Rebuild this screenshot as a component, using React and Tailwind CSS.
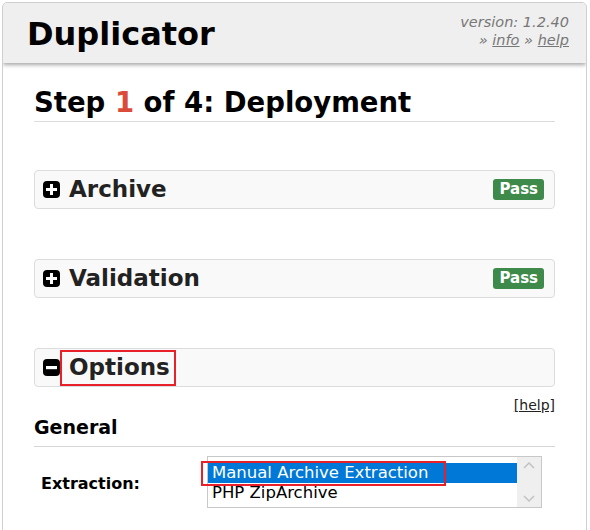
import { useState } from 'react'

const FONT = { fontFamily: '"DejaVu Sans", Verdana, sans-serif' }

function ToggleIcon({ open }) {
  return (
    <svg width="17" height="17" viewBox="0 0 17 17" className="shrink-0">
      <rect x="0" y="0" width="17" height="17" rx="4" fill="#000" />
      {open ? (
        <rect x="3" y="7" width="11" height="3.2" fill="#fff" />
      ) : (
        <path d="M7 3h3v4h4v3h-4v4H7v-4H3V7h4z" fill="#fff" />
      )}
    </svg>
  )
}

function Panel({ title, open, pass, highlight }) {
  return (
    <div className="relative h-[39px] border border-[#dcdcdc] rounded-[4px] bg-[#f9f9f9] flex items-center justify-between pl-[8px] pr-[10px]">
      <div className="flex items-center gap-[9px]">
        <ToggleIcon open={open} />
        <span className="text-[23px] font-bold text-[#222] leading-none">{title}</span>
      </div>
      {pass && (
        <span className="bg-[#3e8a4a] text-white font-bold text-[15px] leading-none rounded-[3px] px-[6px] py-[3px]">
          Pass
        </span>
      )}
      {/* annotation box */}
      {highlight && (
        <span className="absolute left-[25px] top-[1px] w-[116px] h-[36px] border-2 border-[#e8202a]" />
      )}
    </div>
  )
}

export default function App() {
  const [extraction, setExtraction] = useState('manual')

  return (
    <div className="min-h-screen bg-white pt-[2px] pl-[2px]" style={FONT}>
      <div className="w-[585px] h-[540px] border border-[#cfcfcf] rounded-[5px] overflow-hidden bg-white">
        <header className="h-[60px] bg-[#efefef] shadow-[0_2px_4px_rgba(0,0,0,0.35)] flex justify-between items-start pl-[24px] pr-[17px] relative">
          <h1 className="text-[32px] font-bold text-black leading-none mt-[15px]">Duplicator</h1>
          <div className="text-right text-[14.5px] italic text-[#777] leading-[18px] mt-[10px]">
            <div>version: 1.2.40</div>
            <div>
              » <a href="#" className="underline text-[#777]">info</a> » <a href="#" className="underline text-[#777]">help</a>
            </div>
          </div>
        </header>

        <main className="px-[31px]">
          <h2 className="text-[27.5px] font-bold text-black leading-none mt-[26px] pb-[4px] border-b border-[#dcdcdc]">
            Step <span className="text-[#db4b39]">1</span> of 4: Deployment
          </h2>

          <div className="mt-[48px]">
            <Panel title="Archive" pass />
          </div>
          <div className="mt-[50px]">
            <Panel title="Validation" pass />
          </div>
          <div className="mt-[50px]">
            <Panel title="Options" open highlight />
          </div>

          <div className="text-right mt-[6px]">
            <a href="#" className="underline text-[14px] text-[#222] leading-none">[help]</a>
          </div>

          <h3 className="text-[19px] font-bold text-black leading-none mt-[1px] pb-[9px] border-b border-[#d6d6d6]">General</h3>

          <div className="flex items-center mt-[9px]">
            <label className="w-[173px] pl-[7px] pt-[5px] text-[16px] font-bold text-black">Extraction:</label>
            <div className="w-[335px] h-[52px] border border-[#c8c8c8] bg-white flex">
              <div className="flex-1 pt-[6px] text-[16.5px] leading-[20px] text-black">
                <div
                  onClick={() => setExtraction('manual')}
                  className={`relative pl-[4px] ${extraction === 'manual' ? 'bg-[#0078d7] text-white' : ''}`}
                >
                  Manual Archive Extraction
                  <span className="absolute -left-[7px] -top-[2px] w-[245px] h-[25px] border-2 border-[#e8202a]" />
                </div>
                <div
                  onClick={() => setExtraction('zip')}
                  className={`pl-[4px] ${extraction === 'zip' ? 'bg-[#0078d7] text-white' : ''}`}
                >
                  PHP ZipArchive
                </div>
              </div>
              <div className="w-[24px] bg-[#efefef] flex flex-col justify-between items-center py-[4px]">
                <svg width="12" height="8" viewBox="0 0 12 8"><path d="M1 7l5-5 5 5" fill="none" stroke="#c2c2c2" strokeWidth="1.5" /></svg>
                <svg width="12" height="8" viewBox="0 0 12 8"><path d="M1 1l5 5 5-5" fill="none" stroke="#c2c2c2" strokeWidth="1.5" /></svg>
              </div>
            </div>
          </div>
        </main>
      </div>
    </div>
  )
}
